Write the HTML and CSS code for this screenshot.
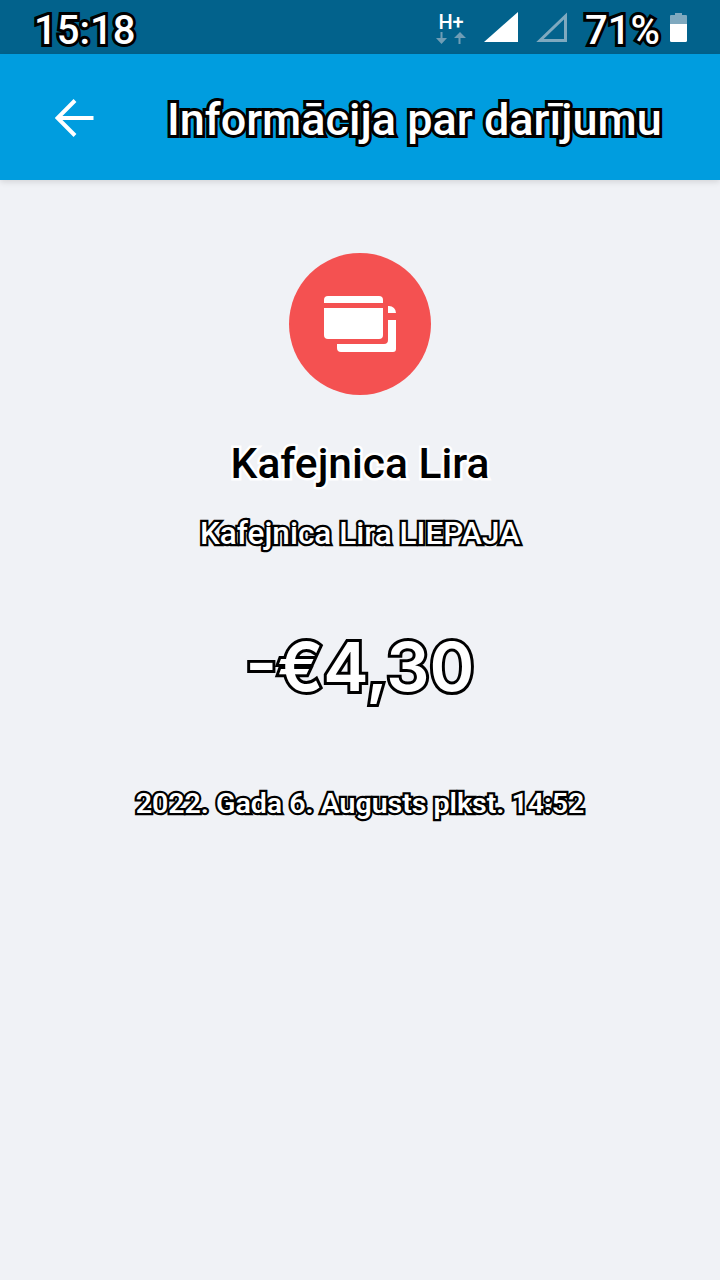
FILE: index.html
```html
<!DOCTYPE html>
<html lang="lv">
<head>
<meta charset="utf-8">
<title>Informācija par darījumu</title>
<link rel="stylesheet" href="styles.css">
</head>
<body>
<div class="page">
  <div class="status">
    <span class="time outlined">15:18</span>
    <div class="status-right">
      <div class="net">
        <span class="hplus">H+</span>
        <svg class="arrows" width="30" height="12" viewBox="0 0 30 12"><path d="M4.500 0h2v6h4.500l-5.500 6L0 6h4.500z" fill="#6f9db5"/><path d="M22.500 12h2V6H30l-6-6-6 6h4.500z" fill="#6f9db5"/></svg>
      </div>
      <svg class="sig1" width="34" height="30" viewBox="0 0 34 30"><path d="M34 0v30H0z" fill="#fff"/></svg>
      <svg class="sig2" width="31" height="30" viewBox="0 0 31 30"><path d="M29.500 4v24.500H4z" fill="none" stroke="#7fa9bf" stroke-width="3"/></svg>
      <span class="pct outlined">71%</span>
      <svg class="batt" width="17" height="29" viewBox="0 0 17 29"><path d="M5 0h7v2h4a1 1 0 0 1 1 1v8H0V3a1 1 0 0 1 1-1h4z" fill="#7fa9bf"/><path d="M0 11h17v16.500a1.500 1.500 0 0 1-1.500 1.500h-14A1.500 1.500 0 0 1 0 27.500z" fill="#fff"/></svg>
    </div>
  </div>
  <header class="toolbar">
    <svg class="back" width="40" height="40" viewBox="0 0 40 40"><path d="M38.500 20H3M20 2.500L2.500 20 20 37.500" fill="none" stroke="#fff" stroke-width="4"/></svg>
    <h1 class="title outlined">Informācija par darījumu</h1>
  </header>
  <main class="content">
    <div class="badge">
      <svg width="72" height="56" viewBox="0 0 72 56"><path d="M4 0h51a4 4 0 0 1 4 4v3H0V4a4 4 0 0 1 4-4z" fill="#fff"/><path d="M0 12h59v27a4 4 0 0 1-4 4H4a4 4 0 0 1-4-4z" fill="#fff"/><path d="M64 10h1a7 7 0 0 1 7 7H64z" fill="#fff"/><path d="M64 24h8v29a3 3 0 0 1-3 3H17a4 4 0 0 1-4-4v-4h47a4 4 0 0 0 4-4z" fill="#fff"/></svg>
    </div>
    <h2 class="merchant">Kafejnica Lira</h2>
    <p class="sub outlined-thin">Kafejnica Lira LIEPAJA</p>
    <p class="amount outlined-thin">-€4,30</p>
    <p class="date outlined-thin">2022. Gada 6. Augusts plkst. 14:52</p>
  </main>
</div>
</body>
</html>
```
FILE: styles.css
```css
* { box-sizing: border-box; }
html, body { margin: 0; padding: 0; }
body { font-family: Roboto, "Liberation Sans", sans-serif; background: #f0f2f6; }
.page { width: 720px; height: 1280px; display: flex; flex-direction: column; overflow: hidden; }
.outlined, .outlined-thin {
  color: #fff;
  -webkit-text-stroke: 6px #000;
  paint-order: stroke fill;
}
.outlined-thin { -webkit-text-stroke-width: 4.500px; }
.status {
  height: 54px; background: #02628c; display: flex; align-items: center;
  justify-content: space-between; padding: 0 33px 0 34px; flex: none;
}
.time { font-size: 40px; font-weight: 500; line-height: 54px; margin-top: 8px; }
.status-right { display: flex; align-items: center; }
.net { display: flex; flex-direction: column; align-items: center; width: 30px; margin-right: 18px; margin-top: 1px; }
.hplus { color: #fff; font-size: 20px; font-weight: 500; line-height: 20px; }
.arrows { display: block; }
.sig1 { margin-right: 18px; }
.sig2 { margin-right: 18px; }
.pct { font-size: 40px; font-weight: 500; line-height: 54px; margin-right: 10px; margin-top: 7px; }
.toolbar {
  height: 126px; background: #009ddf; display: flex; align-items: center; flex: none;
  padding: 4px 0 0 55px; box-shadow: 0 2px 6px rgba(0,0,0,.12); position: relative;
}
.back { flex: none; margin: -2px 72px 0 0; }
.title { margin: 0; font-size: 45px; font-weight: 500; white-space: nowrap; }
.content { display: flex; flex-direction: column; align-items: center; padding-top: 73px; }
.badge {
  width: 142px; height: 142px; border-radius: 50%; background: #f45151;
  display: flex; align-items: center; justify-content: center;
}
.merchant { margin: 42px 0 0; font-size: 42.500px; font-weight: 500; line-height: 54px; color: #000; -webkit-text-stroke: 5px #fff; paint-order: stroke fill; }
.sub { margin: 23px 0 0; font-size: 31.500px; font-weight: 500; line-height: 40px; }
.amount { margin: 67px 0 0; font-family: Inter, sans-serif; font-size: 68px; line-height: 90px; font-weight: 600; -webkit-text-stroke-width: 6px; }
.date { margin: 73px 0 0; font-size: 28.500px; font-weight: 600; line-height: 40px; }
```
